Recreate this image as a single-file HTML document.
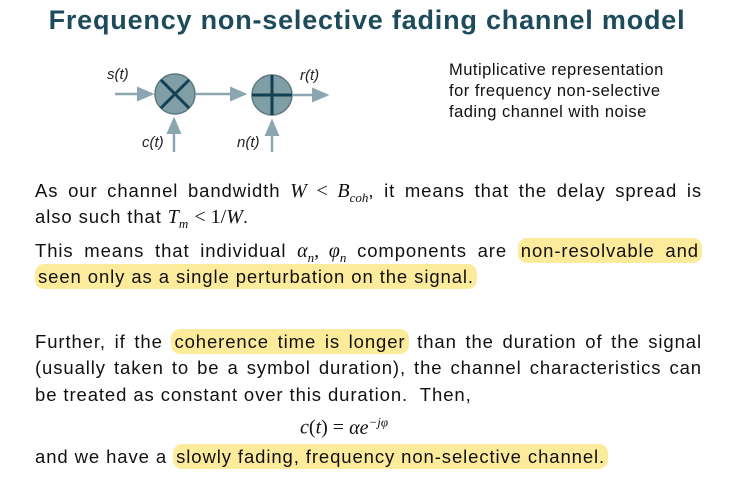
<!DOCTYPE html>
<html><head><meta charset="utf-8"><style>
body{margin:0;width:734px;height:480px;background:#fff;position:relative;overflow:hidden;font-family:"Liberation Sans",sans-serif;color:#111;}
.t{position:absolute;left:0;width:734px;text-align:center;top:5px;font-size:27px;letter-spacing:0.8px;font-weight:bold;color:#1d4b5c;}
.l{position:absolute;left:35px;width:667px;font-size:18.5px;letter-spacing:0.9px;white-space:nowrap;line-height:22px;}
.j{text-align:justify;text-align-last:justify;white-space:normal;}
.h{background:#fdeb9c;border-radius:9px;padding:2px 3px;}
.m{font-family:"Liberation Serif",serif;font-style:italic;font-size:20px;letter-spacing:0;}
.r{font-family:"Liberation Serif",serif;font-size:20px;letter-spacing:0;}
sub{font-size:13px;}
sup{font-size:13px;}
.d{position:absolute;font-style:italic;font-size:15px;color:#222;}
.n{position:absolute;left:449px;top:60px;font-size:16.5px;letter-spacing:0.5px;line-height:21px;color:#111;}
</style></head><body>
<div class="t">Frequency non-selective fading channel model</div>
<svg style="position:absolute;left:0;top:0" width="734" height="170">
<defs><marker id="a" markerWidth="8" markerHeight="8" refX="6" refY="3" orient="auto"><path d="M0,0 L7,3 L0,6z" fill="#8aa6b0"/></marker></defs>
<g stroke="#8aa6b0" stroke-width="2.5" fill="none">
<line x1="115" y1="94" x2="152" y2="94" marker-end="url(#a)"/>
<line x1="196" y1="94" x2="245" y2="94" marker-end="url(#a)"/>
<line x1="293" y1="95" x2="327" y2="95" marker-end="url(#a)"/>
<line x1="174" y1="152" x2="174" y2="119" marker-end="url(#a)"/>
<line x1="272" y1="152" x2="272" y2="121" marker-end="url(#a)"/>
</g>
<circle cx="175" cy="94" r="20" fill="#7f9ea6" stroke="#5f777e" stroke-width="1.5"/>
<path d="M161,80 L189,108 M189,80 L161,108" stroke="#123f52" stroke-width="3"/>
<circle cx="272" cy="95" r="20" fill="#7f9ea6" stroke="#5f777e" stroke-width="1.5"/>
<path d="M272,75 L272,115 M252,95 L292,95" stroke="#123f52" stroke-width="3"/>
</svg>
<div class="d" style="left:107px;top:66px">s(t)</div>
<div class="d" style="left:300px;top:67px">r(t)</div>
<div class="d" style="left:142px;top:134px">c(t)</div>
<div class="d" style="left:237px;top:134px">n(t)</div>
<div class="n">Mutiplicative representation<br>for frequency non-selective<br>fading channel with noise</div>

<div class="l j" style="top:180px">As our channel bandwidth <span class="m">W</span> <span class="r">&lt;</span> <span class="m">B<sub>coh</sub></span>, it means that the delay spread is</div>
<div class="l" style="top:206px">also such that <span class="m">T<sub>m</sub></span> <span class="r">&lt; 1/</span><span class="m">W</span>.</div>
<div class="l j" style="top:240px">This means that individual <span class="m">α<sub>n</sub>, φ<sub>n</sub></span> components are <span class="h">non-resolvable and</span></div>
<div class="l" style="top:266px"><span class="h">seen only as a single perturbation on the signal.</span></div>
<div class="l j" style="top:331px">Further, if the <span class="h">coherence time is longer</span> than the duration of the signal</div>
<div class="l j" style="top:357px">(usually taken to be a symbol duration), the channel characteristics can</div>
<div class="l" style="top:384px">be treated as constant over this duration.&nbsp; Then,</div>
<div class="l" style="top:411px;left:300px;width:auto"><span class="m">c</span><span class="r">(</span><span class="m">t</span><span class="r">) = </span><span class="m">αe<sup>−jφ</sup></span></div>
<div class="l" style="top:446px">and we have a <span class="h">slowly fading, frequency non-selective channel.</span></div>
</body></html>
